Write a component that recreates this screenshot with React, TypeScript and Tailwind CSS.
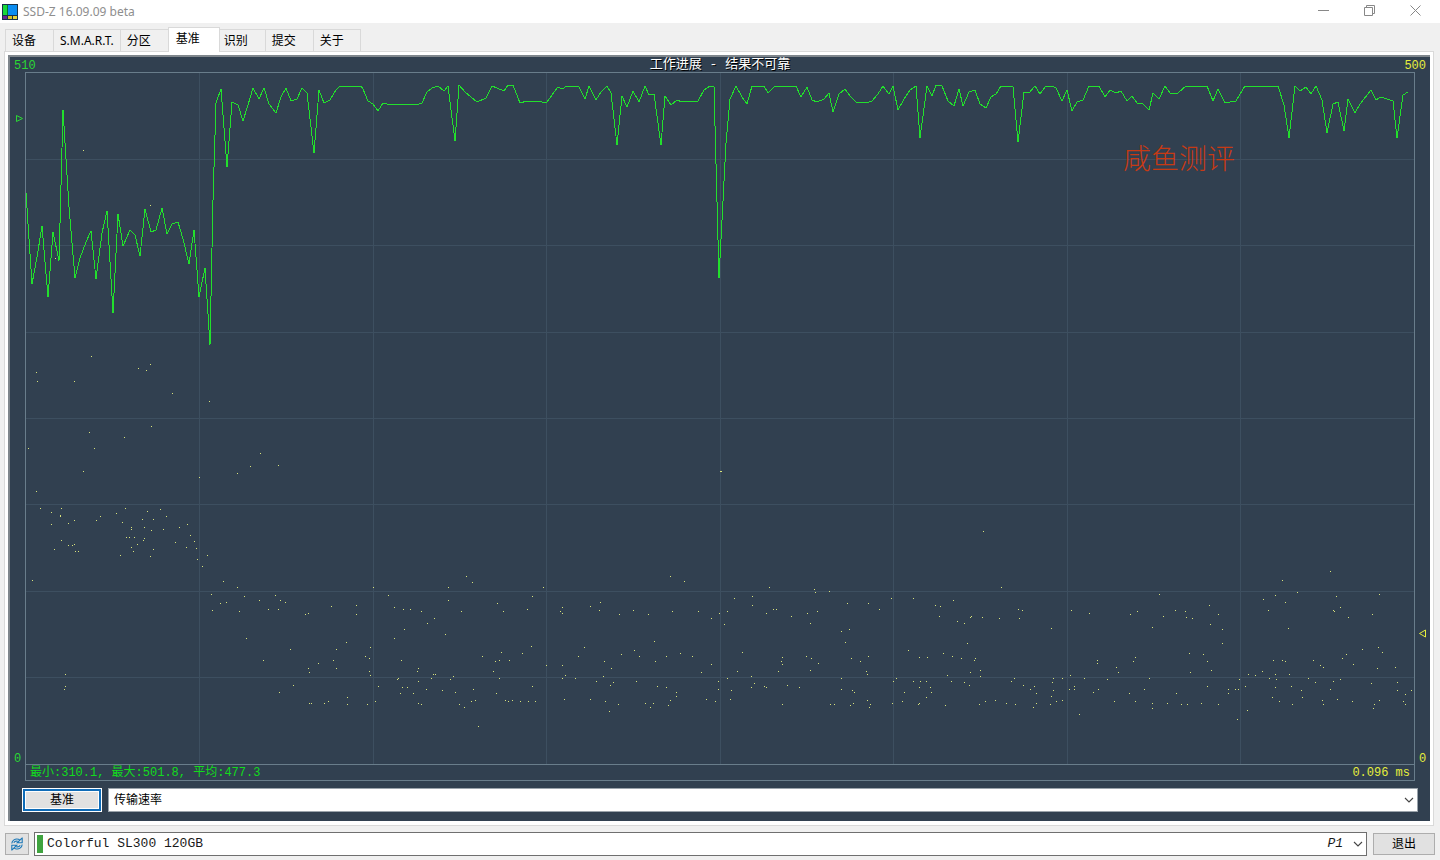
import { useState } from 'react';

const TABS = ['设备', 'S.M.A.R.T.', '分区', '基准', '识别', '提交', '关于'];

// plot area, in chart units
const VIEW = { x: 26, y: 73, w: 1388, h: 691 };

const GRID_X = [199, 373, 546, 720, 893, 1067, 1240];
const GRID_Y = [159, 245, 332, 418, 504, 591, 677];

// transfer rate, x,y pairs
const SPEED = `
26,193 32,284 37,257 42,226 48,297 53,232 59,261 63,110 69,207 75,278 80,258 86,242 91,231 96,279 102,233 107,211
113,313 118,214 123,246 130,230 135,235 140,256 145,209 151,232 156,230 162,208 167,234 172,224 178,222 183,239
189,264 194,230 199,297 205,268 210,345 213,200 216,103 221,89 227,167 232,102 238,105 243,121 248,105 253,88
259,99 264,88 269,104 276,113 281,97 286,88 291,101 297,99 302,88 307,93 314,153 319,90 324,103 330,100 336,90
340,86 361,86 363,89 368,101 373,104 378,111 383,103 387,104 419,104 422,103 427,92 432,88 438,86 444,91 448,86
455,141 459,85 465,92 477,102 486,98 492,86 504,91 508,85 513,85 520,103 527,101 536,101 542,102 547,102 552,95
558,87 562,89 567,86 579,87 585,99 589,86 596,100 601,92 607,86 611,93 617,145 622,96 627,107 633,91 639,102
645,86 649,95 654,94 661,145 665,96 671,105 677,100 682,102 687,101 698,101 704,90 710,86 714,87 719,278 726,143
730,99 736,86 742,97 747,104 752,86 764,86 768,93 775,86 796,86 801,97 807,87 812,100 817,102 824,99 829,93
833,112 839,94 845,89 850,96 856,102 866,103 872,101 878,94 883,86 889,94 893,86 898,110 904,99 910,90 916,86
920,138 927,86 932,96 936,85 942,86 948,101 954,106 959,89 963,106 969,92 975,90 980,104 986,108 991,97 996,94
1001,86 1013,87 1018,142 1024,92 1029,93 1035,86 1040,94 1046,86 1052,86 1056,88 1062,101 1067,90 1072,111
1077,102 1083,100 1089,86 1099,86 1105,97 1110,90 1116,93 1121,91 1127,101 1132,96 1137,103 1143,104 1149,110
1153,93 1159,99 1165,86 1170,93 1178,93 1186,86 1207,86 1213,101 1218,89 1225,103 1236,101 1245,86 1278,86
1284,105 1289,138 1295,86 1300,91 1306,87 1311,94 1316,86 1322,100 1327,133 1333,104 1338,102 1344,131 1348,99
1355,113 1360,104 1371,90 1376,100 1381,97 1387,99 1393,101 1397,138 1403,95 1408,92`;

// access time samples
const ACCESS = `
83,150 150,205 55,258 189,263 91,356 36,372 37,381 74,381 138,368 146,370 150,364 172,393 209,401 151,426 89,432
124,437 28,448 94,448 83,471 199,477 36,491 237,473 250,466 260,453 278,465 40,508 61,508 51,512 60,515 60,516
51,524 68,523 74,520 96,520 100,516 116,513 125,508 122,522 131,527 131,529 142,519 147,511 153,519 160,509
166,516 144,527 151,530 163,529 179,527 187,524 190,535 194,541 186,547 196,548 197,559 207,555 202,566 175,542
61,540 54,549 68,545 72,545 74,544 75,551 78,551 126,537 129,537 134,537 144,538 143,540 137,544 131,547 133,551
120,555 153,549 150,556 32,580 223,581 237,587 211,594 244,596 220,603 226,602 212,610 239,611 259,600 275,595
280,600 285,602 268,609 278,609 305,614 308,613 331,606 356,605 356,614 373,587 246,638 263,660 290,649 318,663
333,660 336,649 336,668 308,668 309,672 346,642 370,647 365,656 369,658 369,671 370,675 378,686 293,685 279,692
309,703 311,703 324,703 328,701 347,697 347,704 367,704 375,701 65,674 65,686 64,689 720,471 721,471
466,576 472,582 448,587 543,587 388,595 394,607 403,609 410,609 421,611 448,600 461,611 497,603 503,611 527,609
532,596 434,618 427,623 404,629 394,638 445,634 401,660 418,668 417,671 397,679 398,678 433,674 435,674 431,678
453,676 450,679 402,687 407,687 400,693 413,693 418,681 426,689 442,690 455,692 418,703 421,704 459,704 464,707
471,701 475,700 473,689 478,726 482,656 495,661 499,660 509,660 501,652 522,653 531,646 493,671 499,678 496,693
505,700 508,701 512,700 520,701 528,701 535,701 532,686 546,665 562,665 565,675 562,678 575,678 560,611 562,607
562,613 590,606 600,602 599,610 619,614 633,610 648,614 672,611 670,576 684,581 698,611 719,613 727,611 734,598
711,618 724,624 584,647 578,656 604,661 621,654 634,650 639,656 654,641 655,661 666,656 680,653 692,656 742,652
611,668 603,676 596,681 613,682 610,685 636,681 657,686 666,687 676,692 676,696 564,699 590,699 605,701 618,704
609,711 645,703 653,703 650,707 670,700 668,705 706,699 715,701 718,681 718,689 711,664 701,672 727,678 737,671
731,690 730,699 983,531 769,587 814,589 815,592 829,591 1001,587 752,596 752,605 766,613 773,609 776,609 791,616
807,613 810,623 817,611 847,603 868,603 879,609 849,629 841,631 845,642 891,598 913,598 935,605 940,606 953,600
939,616 957,621 964,623 970,617 971,616 982,617 999,618 1018,609 1022,610 1019,618 1071,610 1089,613 1051,628
967,643 782,657 781,661 782,664 778,671 806,656 811,658 818,663 810,670 851,658 860,661 868,656 866,671 867,674
908,650 919,657 927,657 943,653 952,656 961,658 975,658 974,660 751,676 754,683 751,687 764,686 766,687 787,685
799,687 782,704 830,704 834,704 841,678 841,689 852,690 854,692 853,703 850,705 867,700 870,704 869,707 896,678
893,681 913,681 920,681 926,681 919,687 930,687 931,692 904,692 892,703 902,701 919,703 918,704 926,697 947,675
951,681 964,682 969,685 970,672 980,670 980,676 945,705 979,704 985,701 995,700 1006,703 1015,704 1014,678
1011,681 1023,685 1030,689 1034,686 1036,693 1036,703 1033,707 1053,678 1062,678 1070,675 1052,682 1053,690
1051,696 1056,701 1062,700 1050,704 1074,686 1069,689 1074,689 1084,678 1097,660 1097,663 1093,692 1079,714
1330,571 1282,580 1159,594 1263,599 1275,595 1297,592 1285,602 1336,596 1379,594 1340,607 1333,610 1334,611
1372,614 1348,617 1288,628 1268,610 1209,605 1218,614 1210,624 1222,629 1222,643 1185,611 1186,617 1192,618
1175,610 1163,616 1152,627 1137,611 1130,614 1189,653 1203,654 1207,661 1211,670 1135,657 1133,661 1116,667
1118,672 1107,679 1149,678 1190,672 1207,686 1098,689 1129,693 1144,689 1176,693 1114,701 1135,701 1152,703
1152,708 1167,703 1181,704 1187,704 1201,703 1218,704 1228,689 1228,693 1235,689 1238,689 1245,686 1239,679
1248,674 1255,675 1262,671 1237,719 1247,710 1269,678 1275,674 1276,679 1275,687 1273,660 1282,660 1285,661
1289,674 1291,686 1301,690 1302,697 1272,697 1279,701 1292,704 1308,678 1315,682 1313,660 1320,665 1323,667
1322,700 1323,704 1330,689 1333,681 1340,679 1342,658 1346,654 1353,664 1337,699 1352,701 1362,649 1378,647
1382,652 1377,668 1395,667 1371,683 1379,700 1374,704 1373,708 1397,682 1397,690 1405,694 1403,701 1405,704
1411,690`;

const parse = (s: string) => s.trim().split(/\s+/).map((p) => p.split(',').map(Number));

const speedPath = 'M' + parse(SPEED).map(([x, y]) => `${x} ${y}`).join('L');
const accessPath = parse(ACCESS).map(([x, y]) => `M${x} ${y + 0.5}h1`).join('');
const gridPath =
  GRID_X.map((x) => `M${x + 0.5} ${VIEW.y}v${VIEW.h}`).join('') +
  GRID_Y.map((y) => `M${VIEW.x} ${y + 0.5}h${VIEW.w}`).join('');

const Chevron = () => (
  <svg className="pointer-events-none h-2 w-[10px] shrink-0" viewBox="0 0 10 8" fill="none" stroke="#444" strokeWidth="1.1">
    <path d="M1 2l4 4 4-4" />
  </svg>
);

const TitleBar = () => (
  <header className="flex h-[23px] items-center bg-white pl-[2px] pr-[2px]">
    <svg className="h-4 w-4" viewBox="0 0 16 16">
      <rect width="16" height="16" fill="#16324a" />
      <rect x="1" y="1" width="4" height="10" fill="#19d83a" />
      <rect x="5" y="1" width="1" height="10" fill="#0a7a2c" />
      <rect x="6" y="1" width="9" height="10" fill="#0a8cf0" />
      <rect x="1" y="12" width="4" height="3" fill="#6a2494" />
      <rect x="6" y="12" width="4" height="3" fill="#d3c025" />
      <rect x="11" y="12" width="4" height="3" fill="#e6d43a" />
    </svg>
    <h1 className="ml-[5px] flex-1 text-xs text-[#8e8e8e]">SSD-Z 16.09.09 beta</h1>
    <div className="flex h-full items-center pb-[2px]">
      <button aria-label="最小化" className="flex w-[46px] justify-center">
        <svg className="h-[11px] w-[11px]" viewBox="0 0 11 11" stroke="#888">
          <path d="M0 5.5h11" />
        </svg>
      </button>
      <button aria-label="还原" className="flex w-[46px] justify-center">
        <svg className="h-[11px] w-[11px]" viewBox="0 0 11 11" fill="none" stroke="#888">
          <path d="M.5 2.5h8v8h-8zM2.5 2.5v-2h8v8h-2" />
        </svg>
      </button>
      <button aria-label="关闭" className="flex w-[46px] justify-center">
        <svg className="h-[11px] w-[11px]" viewBox="0 0 11 11" stroke="#888">
          <path d="M.5 .5l10 10M10.5 .5l-10 10" />
        </svg>
      </button>
    </div>
  </header>
);

const Chart = () => (
  <div className="flex flex-1 flex-col font-['Liberation_Mono','Noto_Sans_CJK_SC',monospace] text-xs leading-[14px]">
    <div className="flex h-[15px] items-center justify-between px-1">
      <span className="pt-[3px] text-[#2bd834]">510</span>
      <span className="text-[13px] text-white [text-shadow:1px_1px_0_#000]">工作进展 - 结果不可靠</span>
      <span className="pt-[3px] text-[#e6ee3c]">500</span>
    </div>

    <div className="flex flex-1">
      <div className="relative flex w-[15px] items-end justify-center pb-[15px] text-[#2bd834]">
        <svg className="absolute left-[6px] top-[5.9%] h-[9px] w-[7px]" viewBox="0 0 7 9" fill="none" stroke="#2bd834">
          <path d="M.5 1.5v6l6-3z" />
        </svg>
        0
      </div>

      <div className="relative flex flex-1 flex-col border border-[#697d8b]">
        <svg
          className="h-0 w-full flex-1"
          viewBox={`${VIEW.x} ${VIEW.y} ${VIEW.w} ${VIEW.h}`}
          preserveAspectRatio="none"
          fill="none"
          shapeRendering="crispEdges"
        >
          <path d={gridPath} stroke="#3d4f60" />
          <path d={accessPath} stroke="#d8e27c" />
          <path d={speedPath} stroke="#22e02c" />
        </svg>
        <div className="flex h-4 items-center justify-between border-t border-[#697d8b] px-1">
          <span className="text-[#12dc1c]">最小:310.1, 最大:501.8, 平均:477.3</span>
          <span className="text-[#e6ee3c]">0.096 ms</span>
        </div>
        <span className="absolute right-[12.9%] top-[9.3%] font-['Noto_Sans_CJK_SC',sans-serif] text-[28px] font-light leading-9 text-[#c73a14]">
          咸鱼测评
        </span>
      </div>

      <div className="relative flex w-[15px] items-end justify-center pb-[15px] text-[#e6ee3c]">
        <svg className="absolute left-[3px] top-[78.6%] h-[9px] w-2" viewBox="0 0 8 9" fill="none" stroke="#e6ee3c">
          <path d="M7.5 1v7l-6-3.5z" />
        </svg>
        0
      </div>
    </div>
  </div>
);

export default function App() {
  const [tab, setTab] = useState('基准');

  return (
    <div className="flex min-h-screen flex-col bg-[#f0f0f0] font-['Noto_Sans','Noto_Sans_CJK_SC',sans-serif] text-xs text-black">
      <TitleBar />

      <nav role="tablist" className="flex h-7 items-end pl-[5px]">
        {TABS.map((t) => (
          <button
            key={t}
            role="tab"
            aria-selected={t === tab}
            onClick={() => setTab(t)}
            className={
              t === tab
                ? 'relative -mb-px -mr-[3px] h-[25px] w-[52px] border border-b-0 border-[#d9d9d9] bg-white pb-[2px] pl-[7px] text-left'
                : 'h-[22px] min-w-12 border border-b-0 border-r-0 border-[#d9d9d9] px-[6px] text-left last:border-r'
            }
          >
            {t}
          </button>
        ))}
      </nav>

      <main className="ml-1 mr-[6px] flex flex-1 flex-col border border-[#d9d9d9] bg-white px-[3px] pb-1 pt-[3px]">
        <div className="flex flex-1 flex-col border-l-2 border-t-2 border-[#7f868c] bg-[#314050]">
          <Chart />
          <div className="flex gap-[6px] px-3 pb-[9px] pt-[7px]">
            <button className="m-px h-[22px] w-[78px] border-2 border-[#0f6cb8] bg-[#e1e1e1] shadow-[inset_0_0_0_1px_#fff] outline outline-white">
              基准
            </button>
            <div className="relative flex flex-1 items-center">
              <select aria-label="测试类型" className="h-6 w-full appearance-none border border-[#9aa3ab] bg-white pl-[5px]">
                <option>传输速率</option>
              </select>
              <span className="pointer-events-none absolute right-1">
                <Chevron />
              </span>
            </div>
          </div>
        </div>
      </main>

      <footer className="flex items-center gap-[6px] px-[5px] pb-1 pt-[6px]">
        <button aria-label="刷新" className="-mr-px flex h-[22px] w-6 items-center justify-center border border-[#adadad] bg-[#e1e1e1]">
          <svg className="h-[14px] w-3" viewBox="0 0 12 14" fill="none" stroke="#1b78b8" strokeWidth="1.1">
            <path d="M.8 6.500C1 3.500 4 1.200 7.600 2.300L9 3.200M11.200.6v5.200H6.200L11.200.8" />
            <path d="M2.800 5.800C3.500 4.400 5 3.800 6.800 4.300" />
            <path d="M11.200 7.500c-.2 3-3.200 5.300-6.800 4.200L3 10.800M.8 13.400V8.200h5L.8 13.200" />
            <path d="M9.200 8.200C8.500 9.600 7 10.200 5.200 9.700" />
          </svg>
        </button>
        <div className="flex h-6 flex-1 items-center border border-[#6f6f6f] bg-white pl-[2px] pr-[3px] font-['Liberation_Mono',monospace] text-[13px] text-[#1a1a1a]">
          <span className="h-[18px] w-[6px] bg-[#3fa33f]" />
          <select aria-label="驱动器" className="h-full flex-1 appearance-none bg-transparent pl-1">
            <option>Colorful SL300 120GB</option>
          </select>
          <span className="mr-[10px] italic">P1</span>
          <Chevron />
        </div>
        <button className="h-[22px] w-[62px] border border-[#adadad] bg-[#e1e1e1]">退出</button>
      </footer>
    </div>
  );
}
